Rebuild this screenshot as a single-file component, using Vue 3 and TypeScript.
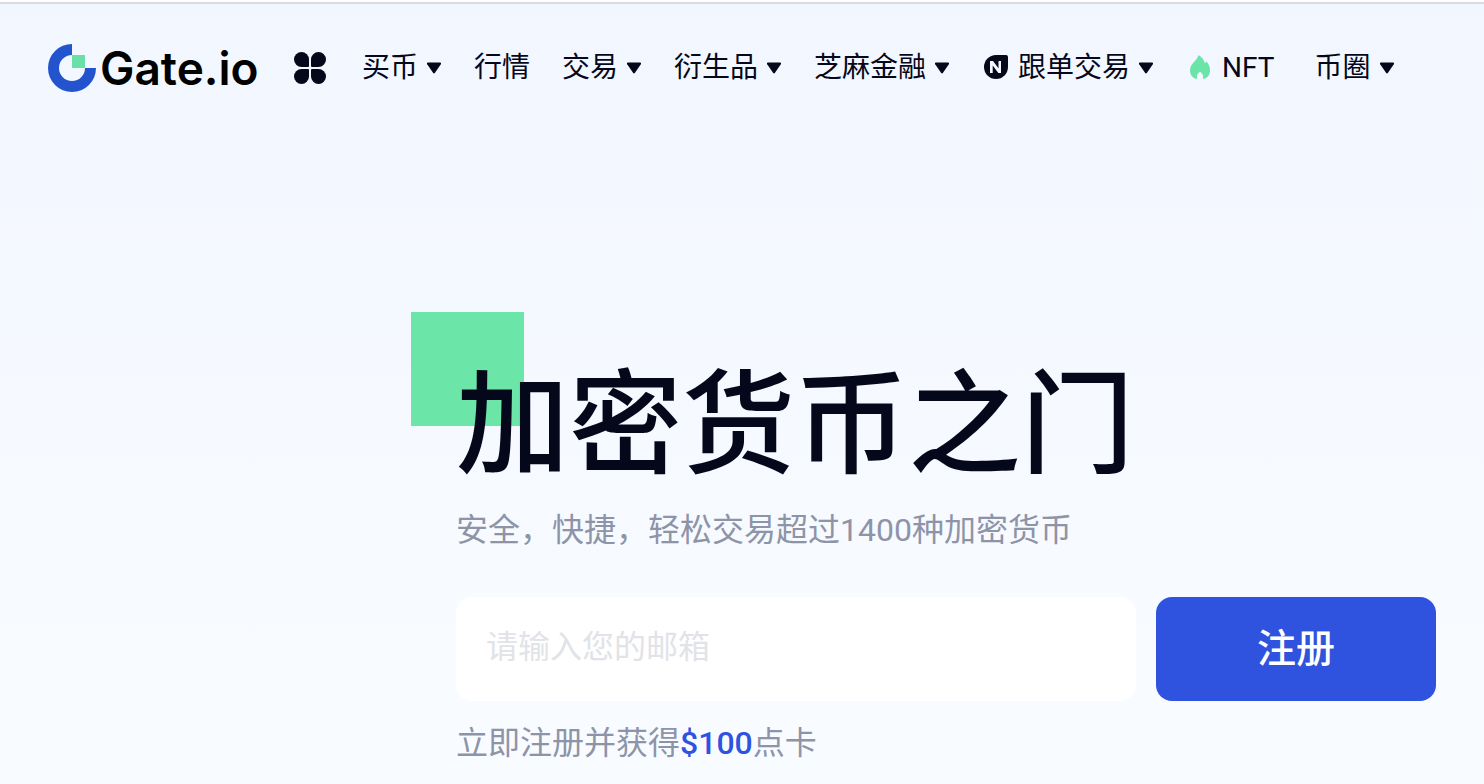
<script setup lang="ts">
import { ref } from 'vue'

interface NavItem {
  label: string
  icon?: 'copy' | 'flame'
  caret: boolean
}

const items: NavItem[] = [
  { label: '买币', caret: true },
  { label: '行情', caret: false },
  { label: '交易', caret: true },
  { label: '衍生品', caret: true },
  { label: '芝麻金融', caret: true },
  { label: '跟单交易', icon: 'copy', caret: true },
  { label: 'NFT', icon: 'flame', caret: false },
  { label: '币圈', caret: true },
]

const email = ref('')
</script>

<template>
  <div class="page">
    <header class="header">
      <a class="logo" href="#" aria-label="Gate.io">
        <svg class="logo-mark" viewBox="0 0 48 48" aria-hidden="true">
          <path fill="#2354ce" d="M24 0v11a13 13 0 1 0 13 13h11A24 24 0 1 1 24 0z" />
          <path fill="#6adfa8" d="M24 11h13v13H24z" />
        </svg>
        <span class="logo-text">Gate.io</span>
      </a>
      <button class="apps" type="button" aria-label="Apps">
        <svg viewBox="0 0 32 32" aria-hidden="true">
          <path d="M7.500 0A7.500 7.500 0 0 1 15 7.500V14a1 1 0 0 1-1 1H7.500A7.500 7.500 0 0 1 7.500 0z" />
          <path d="M24.500 0A7.500 7.500 0 0 0 17 7.500V14a1 1 0 0 0 1 1h6.500A7.500 7.500 0 0 0 24.500 0z" />
          <path d="M7.500 32A7.500 7.500 0 0 0 15 24.500V18a1 1 0 0 0-1-1H7.500A7.500 7.500 0 0 0 7.500 32z" />
          <path d="M24.500 32A7.500 7.500 0 0 1 17 24.500V18a1 1 0 0 1 1-1h6.500A7.500 7.500 0 0 1 24.500 32z" />
        </svg>
      </button>
      <nav class="nav">
        <a v-for="item in items" :key="item.label" class="nav-item" :class="item.icon" href="#">
          <svg v-if="item.icon === 'copy'" class="icon" viewBox="0 0 28 28" aria-hidden="true">
            <path fill="#05081a" d="M14 2h10a2 2 0 0 1 2 2v10A12 12 0 1 1 14 2z" />
            <path fill="#f3f7ff" d="M8 20V8h3l5.500 7.200V8H19v12h-2.700l-5.600-7.400V20z" />
          </svg>
          <svg v-if="item.icon === 'flame'" class="icon" viewBox="0 0 28 28" aria-hidden="true">
            <path
              fill="#6ae4a8"
              d="M12.600 2C15.500 3.600 17.800 6.400 19 10.200L20.600 8.600C22.800 11.300 24 14.200 24 17.200C24 22 21.200 25.200 17 26C17.600 23.200 17 20.800 14 18.600C11 20.800 10.400 23.300 11.100 26C6.800 25.200 4 22 4 17.200C4 14 5.600 11.600 8 9C10 7 11.500 5 12.600 2z"
            />
          </svg>
          <span>{{ item.label }}</span>
          <svg v-if="item.caret" class="caret" viewBox="0 0 16 12" aria-hidden="true">
            <path
              fill="#05081a"
              d="M2 .5h12q1.600.2.800 1.700L9 10.800q-1 1.300-2 0L1.200 2.200Q.400.700 2 .5z"
            />
          </svg>
        </a>
      </nav>
    </header>

    <main class="hero">
      <h1 class="title">加密货币之门</h1>
      <p class="subtitle">安全，快捷，轻松交易超过1400种加密货币</p>
      <form class="form" @submit.prevent>
        <input v-model="email" class="email" type="email" placeholder="请输入您的邮箱" aria-label="请输入您的邮箱" />
        <button class="submit" type="submit">注册</button>
      </form>
      <p class="bonus">立即注册并获得<strong>$100</strong>点卡</p>
    </main>
  </div>
</template>

<style>
body {
  margin: 0;
}
</style>

<style scoped>
.page {
  box-sizing: border-box;
  min-height: 100vh;
  border-top: 2px solid #d9dbe0;
  margin-top: 2px;
  margin-bottom: -2px;
  background: linear-gradient(#f2f6ff, #f9fcff);
  color: #05081a;
  font-family: Roboto, 'Noto Sans CJK SC', sans-serif;
}

.header {
  display: flex;
  align-items: center;
  height: 128px;
  padding: 0 48px;
}

.logo {
  display: flex;
  align-items: center;
  gap: 4px;
  width: 210px;
  color: #000;
  text-decoration: none;
}

.logo-mark {
  flex: none;
  width: 48px;
  height: 48px;
}

.logo-text {
  font: 600 46px/48px Inter, sans-serif;
}

.apps {
  display: flex;
  margin: 0 36px;
  padding: 0;
  border: 0;
  background: none;
}

.apps svg {
  width: 32px;
  height: 32px;
  fill: #05081a;
}

.nav {
  display: flex;
  gap: 32px;
}

.nav-item {
  display: flex;
  align-items: center;
  gap: 8px;
  color: inherit;
  font-size: 28px;
  line-height: 40px;
  text-decoration: none;
  white-space: nowrap;
}

.flame {
  margin-right: 8px;
}

.icon {
  width: 28px;
  height: 28px;
  margin-bottom: 2px;
}

.caret {
  width: 16px;
  height: 12px;
}

.hero {
  padding: 237px 48px 0 456px;
}

.title {
  position: relative;
  z-index: 0;
  margin: 0;
  font-size: 113px;
  font-weight: 500;
  line-height: 114px;
}

.title::before {
  content: '';
  position: absolute;
  z-index: -1;
  top: -57px;
  left: -45px;
  width: 113px;
  height: 114px;
  background: #6ce5a8;
}

.subtitle,
.bonus {
  margin: 0;
  color: #8e94a8;
  font-size: 32px;
  line-height: 48px;
}

.subtitle {
  margin: 23px 0 43px;
}

.form {
  display: flex;
  gap: 20px;
}

.email {
  box-sizing: border-box;
  flex: 1;
  min-width: 0;
  height: 104px;
  padding: 0 30px 4px;
  border: 0;
  border-radius: 16px;
  background: #fff;
  color: inherit;
  font: inherit;
  font-size: 32px;
}

.email::placeholder {
  color: #e1e3e7;
  opacity: 1;
}

.submit {
  width: 280px;
  height: 104px;
  padding: 0 0 8px;
  border: 0;
  border-radius: 16px;
  background: #2f53de;
  color: #fff;
  font: inherit;
  font-size: 39px;
  font-weight: 500;
}

.bonus {
  margin-top: 18px;
}

.bonus strong {
  color: #2f53de;
  font-weight: 500;
}
</style>
